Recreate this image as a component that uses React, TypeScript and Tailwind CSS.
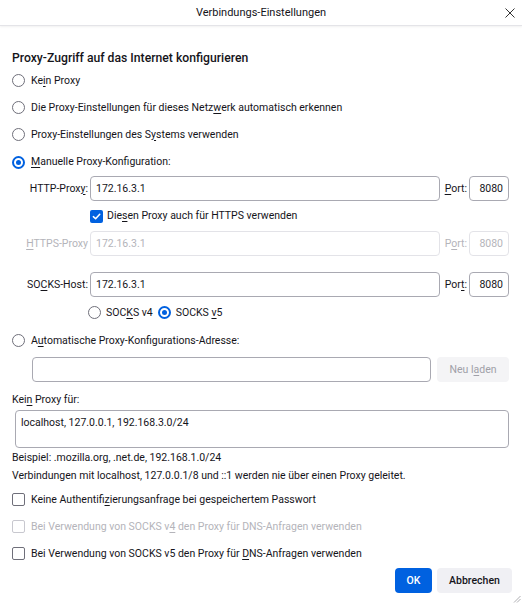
import React from "react";

const Radio = ({ checked = false }: { checked?: boolean }) =>
  checked ? (
    <span className="w-[13px] h-[13px] rounded-full border-[2px] border-[#0061e0] flex items-center justify-center shrink-0">
      <span className="w-[5px] h-[5px] rounded-full bg-[#0061e0]" />
    </span>
  ) : (
    <span className="w-[13px] h-[13px] rounded-full border border-[#6f6f7a] shrink-0" />
  );

const Check = ({ checked = false, disabled = false }: { checked?: boolean; disabled?: boolean }) =>
  checked ? (
    <span className="w-[13px] h-[13px] rounded-[2px] bg-[#0061e0] flex items-center justify-center shrink-0">
      <svg width="9" height="9" viewBox="0 0 10 10">
        <path d="M1.5 5.2 L4 7.5 L8.6 2.6" fill="none" stroke="white" strokeWidth="1.7" strokeLinecap="round" strokeLinejoin="round" />
      </svg>
    </span>
  ) : (
    <span
      className={`w-[13px] h-[13px] rounded-[2px] border shrink-0 ${disabled ? "border-[#c8c8cf]" : "border-[#6f6f7a]"}`}
    />
  );

const U = ({ children }: { children: React.ReactNode }) => <span className="underline underline-offset-2">{children}</span>;

const Field = ({ value, disabled = false, className = "" }: { value: string; disabled?: boolean; className?: string }) => (
  <div
    className={`h-[25px] rounded-[4px] border flex items-center px-[5px] ${
      disabled ? "border-[#e3e3e8] text-[#b4b4ba]" : "border-[#a9a9b2] text-[#15141a]"
    } ${className}`}
  >
    {value}
  </div>
);

export default function App() {
  return (
    <div
      className="w-[522px] h-[604px] bg-white text-[#15141a] text-[10.5px] relative overflow-hidden"
      style={{ fontFamily: 'Roboto, "Noto Sans", sans-serif' }}
    >
      <div className="h-[26px] flex items-center justify-center relative border-b border-[#e4e4e8] shadow-[0_1px_2px_rgba(0,0,0,0.06)]">
        <span className="text-[11px] pt-[2px]">Verbindungs-Einstellungen</span>
        <svg className="absolute right-[7px] top-[8px]" width="10" height="10" viewBox="0 0 10 10">
          <path d="M0.5 0.5 L9.5 9.5 M9.5 0.5 L0.5 9.5" stroke="#333" strokeWidth="1" />
        </svg>
      </div>

      <div className="pl-[12px] pr-[13px]">
        <div className="mt-[22px] h-[20px] flex items-center text-[12.2px] font-medium">
          Proxy-Zugriff auf das Internet konfigurieren
        </div>

        <div className="flex flex-col mt-[-1px]">
          <div className="h-[27px] flex items-center gap-[6px] pl-[0px]">
            <Radio />
            <span>Ke<U>i</U>n Proxy</span>
          </div>
          <div className="h-[27px] flex items-center gap-[6px]">
            <Radio />
            <span>Die Proxy-Einstellungen für dieses Netz<U>w</U>erk automatisch erkennen</span>
          </div>
          <div className="h-[27px] flex items-center gap-[6px]">
            <Radio />
            <span>Proxy-Einstellungen des S<U>y</U>stems verwenden</span>
          </div>
          <div className="h-[28px] flex items-center gap-[6px]">
            <Radio checked />
            <span><U>M</U>anuelle Proxy-Konfiguration:</span>
          </div>
        </div>

        <div className="flex flex-col">
          <div className="flex items-center h-[25px]">
            <div className="w-[78px] text-right pr-[2px] shrink-0 whitespace-nowrap">HTTP-Prox<U>y</U>:</div>
            <Field value="172.16.3.1" className="flex-1" />
            <div className="pl-[5px] pr-[2px] shrink-0"><U>P</U>ort:</div>
            <Field value="8080" className="w-[40px] justify-end" />
          </div>
          <div className="h-[30px] flex items-center gap-[4px] pl-[78px]">
            <Check checked />
            <span>Die<U>s</U>en Proxy auch für HTTPS verwenden</span>
          </div>
          <div className="flex items-center h-[25px] text-[#b4b4ba]">
            <div className="w-[78px] text-right pr-[2px] shrink-0 whitespace-nowrap"><U>H</U>TTPS-Proxy</div>
            <Field value="172.16.3.1" disabled className="flex-1" />
            <div className="pl-[5px] pr-[2px] shrink-0">P<U>o</U>rt:</div>
            <Field value="8080" disabled className="w-[40px] justify-end" />
          </div>
          <div className="flex items-center h-[25px] mt-[16px]">
            <div className="w-[78px] text-right pr-[2px] shrink-0 whitespace-nowrap">SO<U>C</U>KS-Host:</div>
            <Field value="172.16.3.1" className="flex-1" />
            <div className="pl-[5px] pr-[2px] shrink-0">Por<U>t</U>:</div>
            <Field value="8080" className="w-[40px] justify-end" />
          </div>
          <div className="h-[31px] flex items-center pl-[76px] gap-[5px]">
            <Radio />
            <span>SOC<U>K</U>S v4</span>
            <Radio checked />
            <span>SOCKS <U>v</U>5</span>
          </div>
        </div>

        <div className="h-[25px] flex items-center gap-[6px]">
          <Radio />
          <span>A<U>u</U>tomatische Proxy-Konfigurations-Adresse:</span>
        </div>

        <div className="mt-[4px] flex items-center gap-[6px] pl-[20px]">
          <div className="h-[25px] flex-1 rounded-[4px] border border-[#a9a9b2]" />
          <div className="h-[25px] w-[72px] rounded-[4px] bg-[#f4f4f6] text-[#a0a0a8] flex items-center justify-center">
            Neu l<U>a</U>den
          </div>
        </div>

        <div className="mt-[6px] h-[22px] flex items-center pt-[1px]">
          <span>Kei<U>n</U> Proxy für:</span>
        </div>
        <div className="ml-[3px] h-[38px] rounded-[4px] border border-[#a9a9b2] px-[5px] pt-[4px]">
          localhost, 127.0.0.1, 192.168.3.0/24
        </div>
        <div className="h-[18px] mt-[1px] flex items-center">Beispiel: .mozilla.org, .net.de, 192.168.1.0/24</div>
        <div className="h-[17px] flex items-center">
          Verbindungen mit localhost, 127.0.0.1/8 und ::1 werden nie über einen Proxy geleitet.
        </div>

        <div className="mt-[2px] flex flex-col">
          <div className="h-[27px] flex items-center gap-[6px]">
            <Check />
            <span>Keine Authentifi<U>z</U>ierungsanfrage bei gespeichertem Passwort</span>
          </div>
          <div className="h-[27px] flex items-center gap-[6px] text-[#b4b4ba]">
            <Check disabled />
            <span>Bei Verwendung von SOCKS v<U>4</U> den Proxy für DNS-Anfragen verwenden</span>
          </div>
          <div className="h-[27px] flex items-center gap-[6px]">
            <Check />
            <span>Bei Verwendung von SOCKS v5 den Proxy für <U>D</U>NS-Anfragen verwenden</span>
          </div>
        </div>

        <div className="mt-[1px] flex justify-end gap-[5px] mr-[-3px]">
          <div className="h-[25px] w-[37px] rounded-[4px] bg-[#0061e0] text-white font-medium flex items-center justify-center">
            OK
          </div>
          <div className="h-[25px] w-[75px] rounded-[4px] bg-[#f0f0f4] font-medium flex items-center justify-center">
            Abbrechen
          </div>
        </div>
      </div>

      <svg className="absolute right-[1px] bottom-[1px]" width="8" height="8" viewBox="0 0 8 8">
        <path d="M7.5 1 L1 7.5 M7.5 4 L4 7.5" stroke="#9a9aa0" strokeWidth="0.8" />
      </svg>
    </div>
  );
}
